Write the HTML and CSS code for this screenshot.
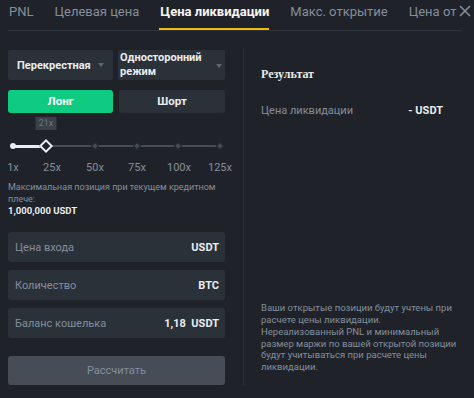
FILE: index.html
```html
<!DOCTYPE html>
<html lang="ru">
<head>
<meta charset="utf-8">
<link rel="stylesheet" href="styles.css">
</head>
<body>
<div class="tabs">
  <div class="tab">PNL</div>
  <div class="tab">Целевая цена</div>
  <div class="tab active">Цена ликвидации</div>
  <div class="tab">Макс. открытие</div>
  <div class="tab">Цена от</div>
</div>
<svg class="close" width="12" height="12" viewBox="0 0 12 12"><path d="M1 1L11 11M11 1L1 11" stroke="#848e9c" stroke-width="1.6" fill="none"/></svg>

<div class="main">
  <div class="left">
    <div class="selects">
      <div class="select sel-a"><span>Перекрестная</span><i class="caret"></i></div>
      <div class="select sel-b"><span>Односторонний режим</span><i class="caret"></i></div>
    </div>
    <div class="sides">
      <div class="side long">Лонг</div>
      <div class="side short">Шорт</div>
    </div>
    <div class="slider">
      <div class="tip" style="left:46px">21x</div>
      <div class="track"></div>
      <div class="fill" style="width:33px"></div>
      <i class="start"></i>
      <i class="tick" style="left:95px"></i>
      <i class="tick" style="left:137px"></i>
      <i class="tick" style="left:178px"></i>
      <i class="tick" style="left:220px"></i>
      <i class="thumb" style="left:46px"></i>
      <span class="mark" style="left:13px">1x</span>
      <span class="mark" style="left:52px">25x</span>
      <span class="mark" style="left:95px">50x</span>
      <span class="mark" style="left:137px">75x</span>
      <span class="mark" style="left:179px">100x</span>
      <span class="mark" style="left:220px">125x</span>
    </div>
    <p class="maxpos">Максимальная позиция при текущем кредитном<br>плече:</p>
    <p class="maxval">1,000,000 USDT</p>
    <div class="field"><span class="lbl">Цена входа</span><span class="unit">USDT</span></div>
    <div class="field"><span class="lbl">Количество</span><span class="unit">BTC</span></div>
    <div class="field"><span class="lbl">Баланс кошелька</span><span class="unit">1,18&nbsp;&nbsp;USDT</span></div>
    <div class="calc">Рассчитать</div>
  </div>
  <div class="right">
    <div class="res-title">Результат</div>
    <div class="res-row"><span class="lbl">Цена ликвидации</span><span class="val">- USDT</span></div>
    <p class="note">Ваши открытые позиции будут учтены при<br>расчете цены ликвидации.<br>Нереализованный PNL и минимальный<br>размер маржи по вашей открытой позиции<br>будут учитываться при расчете цены<br>ликвидации.</p>
  </div>
</div>
</body>
</html>
```
FILE: styles.css
```css
html, body {
  margin: 0;
  padding: 0;
}
body {
  width: 474px;
  height: 398px;
  overflow: hidden;
  position: relative;
  background: #1f2329;
  font-family: Roboto, "Liberation Sans", sans-serif;
  color: #eaecef;
}
p { margin: 0; }

.tabs {
  display: flex;
  gap: 20px;
  margin-left: 8px;
  width: 454px;
  height: 30px;
  border-bottom: 1px solid #31363e;
  overflow: hidden;
  white-space: nowrap;
}
.tab {
  flex: none;
  box-sizing: border-box;
  height: 30px;
  padding-left: 1px;
  font-size: 13px;
  line-height: 24px;
  color: #848e9c;
}
.tab.active {
  color: #f5f5f5;
  font-weight: 700;
  border-bottom: 2px solid #f0b90b;
}
.close {
  position: absolute;
  left: 459px;
  top: 5px;
}

.main {
  display: flex;
  padding: 17px 0 0 8px;
}
.left {
  width: 217px;
  margin-top: 2px;
}
.selects {
  display: flex;
  gap: 5px;
}
.select {
  position: relative;
  height: 30px;
  background: #2b3139;
  border-radius: 2px;
  font-size: 11px;
  font-weight: 700;
  color: #eaecef;
  display: flex;
  align-items: center;
}
.sel-a {
  width: 105px;
  padding-left: 9px;
  box-sizing: border-box;
}
.sel-b {
  width: 107px;
  padding-left: 2px;
  box-sizing: border-box;
  line-height: 14px;
}
.sel-b span { width: 90px; }
.caret {
  display: block;
  width: 0;
  height: 0;
  border-left: 3.5px solid transparent;
  border-right: 3.5px solid transparent;
  border-top: 4px solid #5e6673;
}
.sel-a .caret { margin-left: 7px; }
.sel-b .caret { margin-left: 6px; margin-top: 2px; }

.sides {
  display: flex;
  gap: 6px;
  margin-top: 10px;
}
.side {
  height: 23px;
  border-radius: 3px;
  font-size: 11.5px;
  font-weight: 700;
  line-height: 23px;
  text-align: center;
  color: #fff;
}
.long { width: 105px; background: #0ecb81; }
.short { width: 106px; background: #2b3139; color: #eaecef; }

.slider {
  position: relative;
  height: 68px;
  margin-left: -8px;
}
.tip {
  position: absolute;
  top: 4px;
  transform: translateX(-50%);
  width: 21px;
  height: 13px;
  background: #3b4048;
  color: #6b7280;
  font-size: 9px;
  line-height: 13px;
  text-align: center;
}
.track {
  position: absolute;
  left: 13px;
  top: 32px;
  width: 207px;
  height: 2px;
  background: #474d57;
}
.fill {
  position: absolute;
  left: 13px;
  top: 32px;
  height: 3px;
  background: #eaecef;
}
.start {
  position: absolute;
  left: 10px;
  top: 30px;
  width: 6px;
  height: 6px;
  border-radius: 50%;
  background: #eaecef;
}
.tick {
  position: absolute;
  top: 33px;
  width: 6px;
  height: 6px;
  margin: -3px 0 0 -3px;
  background: #474d57;
  border: 1px solid #1f2329;
  box-sizing: border-box;
  transform: rotate(45deg);
}
.thumb {
  position: absolute;
  top: 33px;
  width: 10px;
  height: 10px;
  margin: -5px 0 0 -5px;
  background: #1f2329;
  border: 2px solid #eaecef;
  box-sizing: border-box;
  transform: rotate(45deg);
}
.mark {
  position: absolute;
  top: 48px;
  transform: translateX(-50%);
  font-size: 11px;
  line-height: 14px;
  color: #848e9c;
}
.maxpos {
  font-size: 9px;
  line-height: 12px;
  color: #848e9c;
  white-space: nowrap;
}
.maxval {
  font-size: 9.5px;
  font-weight: 700;
  line-height: 12px;
  color: #eaecef;
}
.field {
  display: flex;
  justify-content: space-between;
  align-items: center;
  height: 30px;
  margin-top: 8px;
  padding: 0 6px 0 7px;
  background: #2b3139;
  border-radius: 3px;
  font-size: 11px;
}
.maxval + .field { margin-top: 15px; }
.field .lbl { color: #848e9c; }
.field .unit { color: #eaecef; font-weight: 700; }
.calc {
  height: 29px;
  margin-top: 18px;
  background: #474d57;
  border-radius: 3px;
  font-size: 11px;
  line-height: 29px;
  text-align: center;
  color: #848e9c;
}

.right {
  display: flex;
  flex-direction: column;
  box-sizing: border-box;
  width: 231px;
  height: 337px;
  margin-left: 18px;
  padding: 0 31px 12px 17px;
  border-left: 1px solid #2b3139;
}
.res-title {
  margin-top: 19px;
  font-family: "Liberation Serif", serif;
  font-weight: 700;
  font-size: 12px;
  line-height: 14px;
  color: #eaecef;
}
.res-row {
  display: flex;
  justify-content: space-between;
  margin-top: 23px;
  font-size: 11px;
  line-height: 14px;
}
.res-row .lbl { color: #848e9c; }
.res-row .val { color: #eaecef; font-weight: 700; }
.note {
  margin-top: auto;
  font-size: 9.5px;
  line-height: 11.8px;
  color: #848e9c;
  white-space: nowrap;
}
```
